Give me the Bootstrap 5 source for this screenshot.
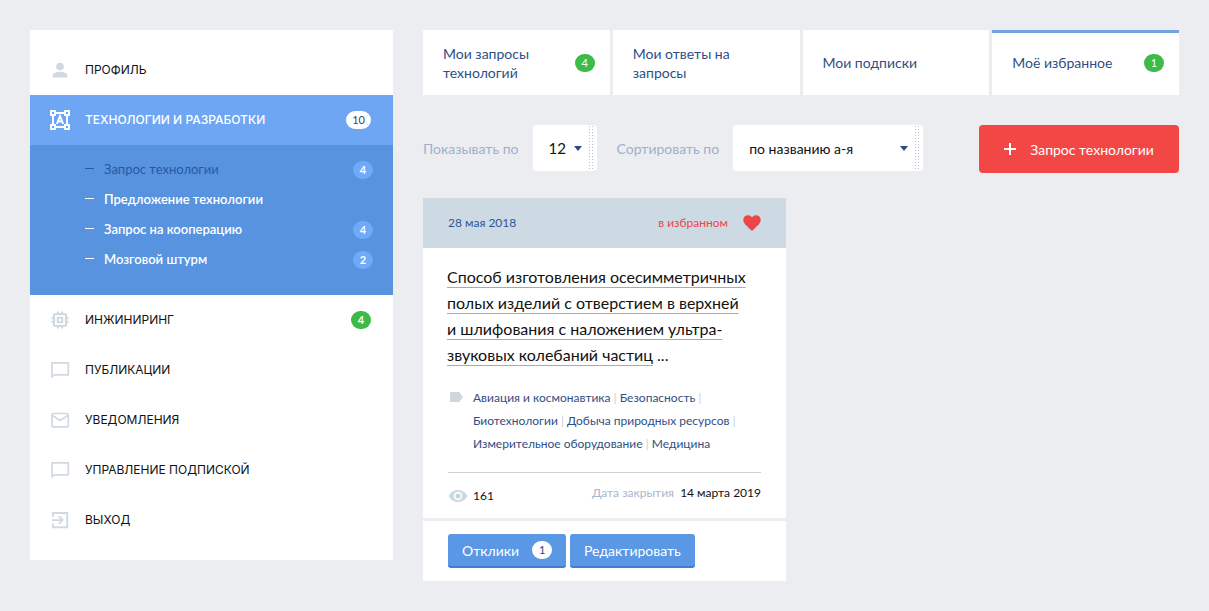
<!DOCTYPE html>
<html lang="ru">
<head>
<meta charset="utf-8">
<meta name="viewport" content="width=device-width, initial-scale=1">
<title>Моё избранное</title>
<link href="https://cdn.jsdelivr.net/npm/bootstrap@5.3.0/dist/css/bootstrap.min.css" rel="stylesheet">
<style>
  body { background: #ebedf1; color: #111; font-family: Lato, "Liberation Sans", sans-serif; font-size: 14px; }
  a { text-decoration: none; }
  .page { padding: 30px; }
  .page-row { --bs-gutter-x: 30px; }

  .side { background: #fff; padding: 15px 0; font-family: Inter, "Liberation Sans", sans-serif; font-size: 12px; }
  .side-link { height: 50px; padding: 0 22px 0 20px; color: #111; }
  .side-link svg { width: 20px; height: 20px; margin-right: 15px; color: #d0d9e1; }
  .side-link.current { background: #6ea6f4; color: #fff; font-weight: 500; }
  .side-link.current svg { color: #fff; }
  .sub { background: #5893df; padding: 10px 20px 20px 55px; font-family: Lato, "Liberation Sans", sans-serif; font-size: 13px; }
  .sub a { height: 30px; color: #fff; font-weight: 600; }
  .sub a::before { content: ""; width: 9px; height: 1px; margin: 0 10px 3px 0; background: currentColor; }
  .sub a.chosen { color: #2659a3; font-weight: 400; }

  .pill { min-width: 20px; height: 18px; padding: 0 6px; border-radius: 9px; font: 11px/18px Lato, sans-serif; text-align: center; }
  .pill-green { background: #3cbb48; color: #fff; }
  .pill-white { background: #fff; color: #38446e; }
  .pill-blue { background: #6ea9fa; color: #fff; font-weight: 700; }

  .tabs { gap: 3px; }
  .tabs a { flex: 1 1 0; height: 65px; padding: 0 15px 0 20px; background: #fff; color: #2d4f85; line-height: 19px; }
  .tabs a.chosen { border-top: 3px solid #72a3e2; padding-bottom: 3px; }

  .tools { margin-top: 30px; }
  .tools label { color: #9fb0cd; margin-right: 14px; }
  .pick { height: 46px; margin-right: 20px; padding: 0 16px; border: 0; border-radius: 4px; color: #111; font-size: 14px; appearance: none;
    background: #fff url("data:image/svg+xml,%3Csvg xmlns='http://www.w3.org/2000/svg' viewBox='0 0 8 5'%3E%3Cpath fill='%232b4c80' d='M0 0h8L4 5z'/%3E%3C/svg%3E") right 15px center / 8px 5px no-repeat; }
  .pick-wrap { position: relative; }
  .pick-wrap::after { content: ""; position: absolute; top: 1px; right: 22px; bottom: 1px; width: 6px; pointer-events: none;
    background: linear-gradient(90deg, transparent 1px, #fff 1px) 0 0 / 3px 3px, linear-gradient(#b9bfc9 1px, #fff 1px) 0 0 / 3px 3px; }
  .pick-count { width: 64px; font-size: 15px; }
  .pick-sort { width: 190px; }
  .btn-ask { width: 200px; height: 48px; border-radius: 4px; background: #f24744; color: #fff; font-size: 14px; }
  .btn-ask svg { width: 12px; height: 12px; margin-right: 14px; }

  .item { margin-top: 25px; }
  .item-head { height: 50px; padding: 0 25px; background: #cddae4; color: #2f5597; font-size: 12px; }
  .item-fav { color: #ee4548; }
  .item-fav svg { width: 18px; height: 16px; margin-left: 15px; }
  .item-body { background: #fff; padding: 16px 25px 10px; }
  .item-title { margin: 0 -1px 18px; font-size: 16px; line-height: 26px; font-weight: 400; }
  .item-title a { color: #111; text-decoration: underline; text-decoration-color: #aaa; text-decoration-thickness: 1px; text-underline-offset: 4px; text-decoration-skip-ink: none; }
  .tags { padding-bottom: 17px; border-bottom: 1px solid #d0d0d2; font-size: 12px; line-height: 23px; color: #c5d0dc; }
  .tags a { color: #2f4f85; }
  .tags svg { width: 13px; height: 10px; margin: 6px 10px 0 2px; color: #ccd7e0; }
  .stats { padding-top: 8px; font-size: 12px; line-height: 24px; }
  .stats svg { width: 20px; height: 14px; margin-right: 5px; }
  .stats .views { padding-top: 3px; }
  .stats .muted { color: #a9b6cc; }
  .item-foot { margin-top: 3px; padding: 13px 25px; background: #fff; }
  .btn-act { height: 34px; padding: 0 14px; border: 0; border-bottom: 2px solid #3f7fd0; border-radius: 3px; background: #5a98e6; color: #fff; font-size: 14px; }
  .btn-act .pill { margin-left: 13px; }
</style>
</head>
<body>
<div class="container-fluid page">
  <div class="row page-row">
    <nav class="col-4">
      <div class="side">
        <a href="#" class="side-link d-flex align-items-center"><svg viewBox="0 0 20 20" fill="currentColor"><circle cx="10" cy="6.500" r="3.800"/><path d="M2.700 17.500v-2c0-2.600 4.500-3.800 7.300-3.800s7.300 1.200 7.300 3.800v2z"/></svg>ПРОФИЛЬ</a>
        <a href="#" class="side-link current d-flex align-items-center"><svg viewBox="0 0 20 20" fill="none" stroke="currentColor" stroke-width="1.900"><path d="M5.500 3h9M5.500 17h9M3 5.500v9M17 5.500v9M1 1h4v4H1zM15 1h4v4h-4zM1 15h4v4H1zM15 15h4v4h-4zM6.800 14 10 6l3.200 8M8 11.500h4"/></svg>ТЕХНОЛОГИИ И РАЗРАБОТКИ<span class="pill pill-white ms-auto">10</span></a>
        <div class="sub">
          <a href="#" class="chosen d-flex align-items-center">Запрос технологии<span class="pill pill-blue ms-auto">4</span></a>
          <a href="#" class="d-flex align-items-center">Предложение технологии</a>
          <a href="#" class="d-flex align-items-center">Запрос на кооперацию<span class="pill pill-blue ms-auto">4</span></a>
          <a href="#" class="d-flex align-items-center">Мозговой штурм<span class="pill pill-blue ms-auto">2</span></a>
        </div>
        <a href="#" class="side-link d-flex align-items-center"><svg viewBox="0 0 20 20" fill="none" stroke="currentColor" stroke-width="2"><rect x="4" y="4" width="12" height="12" rx="1"/><rect x="7.800" y="7.800" width="4.400" height="4.400"/><path d="M8 4V1.500M12 4V1.500M8 18.500V16M12 18.500V16M4 8H1.500M4 12H1.500M18.500 8H16M18.500 12H16"/></svg>ИНЖИНИРИНГ<span class="pill pill-green fw-bold ms-auto">4</span></a>
        <a href="#" class="side-link d-flex align-items-center"><svg viewBox="0 0 20 20" fill="none" stroke="currentColor" stroke-width="1.700"><path d="M2 17V2.800h16.300v12H4.300z" stroke-linejoin="round"/></svg>ПУБЛИКАЦИИ</a>
        <a href="#" class="side-link d-flex align-items-center"><svg viewBox="0 0 20 20" fill="none" stroke="currentColor" stroke-width="1.700"><rect x="2" y="3.500" width="16.300" height="13.300" rx="1"/><path d="m2.500 5.500 7.600 5 7.700-5"/></svg>УВЕДОМЛЕНИЯ</a>
        <a href="#" class="side-link d-flex align-items-center"><svg viewBox="0 0 20 20" fill="none" stroke="currentColor" stroke-width="1.700"><path d="M2 17V2.800h16.300v12H4.300z" stroke-linejoin="round"/></svg>УПРАВЛЕНИЕ ПОДПИСКОЙ</a>
        <a href="#" class="side-link d-flex align-items-center"><svg viewBox="0 0 20 20" fill="none" stroke="currentColor" stroke-width="1.900"><path d="M2.900 7V3h14.300v14.300H2.900v-4M2 10.100h10M8.800 6.300l3.800 3.800-3.800 3.800"/></svg>ВЫХОД</a>
      </div>
    </nav>

    <main class="col-8">
      <nav class="tabs d-flex">
        <a href="#" class="d-flex align-items-center justify-content-between"><span>Мои запросы<br>технологий</span><span class="pill pill-green">4</span></a>
        <a href="#" class="d-flex align-items-center"><span>Мои ответы на<br>запросы</span></a>
        <a href="#" class="d-flex align-items-center">Мои подписки</a>
        <a href="#" class="chosen d-flex align-items-center justify-content-between">Моё избранное<span class="pill pill-green">1</span></a>
      </nav>

      <form class="tools d-flex align-items-start">
        <div class="pick-wrap d-flex align-items-center">
          <label for="count">Показывать по</label>
          <select id="count" class="pick pick-count"><option>12</option><option>24</option></select>
        </div>
        <div class="pick-wrap d-flex align-items-center">
          <label for="sort">Сортировать по</label>
          <select id="sort" class="pick pick-sort"><option>по названию а-я</option><option>по дате</option></select>
        </div>
        <button type="button" class="btn btn-ask ms-auto d-flex align-items-center justify-content-center p-0"><svg viewBox="0 0 12 12" stroke="currentColor" stroke-width="2"><path d="M6 0v12M0 6h12"/></svg>Запрос технологии</button>
      </form>

      <div class="row page-row">
        <article class="col-6">
          <div class="item">
            <div class="item-head d-flex align-items-center justify-content-between">
              <span>28 мая 2018</span>
              <a href="#" class="item-fav d-flex align-items-center">в избранном<svg viewBox="0 0 18 16" fill="currentColor"><path d="M9 16 7.700 14.800C3.100 10.600.3 8 .3 4.800.3 2.200 2.300.2 4.900.2 6.400.2 8 1 9 2.200 10 1 11.600.2 13.100.2c2.600 0 4.600 2 4.600 4.600 0 3.200-2.800 5.800-7.400 10z"/></svg></a>
            </div>
            <div class="item-body">
              <h2 class="item-title"><a href="#">Способ изготовления осесимметричных<br>полых изделий с отверстием в верхней<br>и шлифования с наложением ультра-<br>звуковых колебаний частиц</a> ...</h2>
              <div class="tags d-flex align-items-start">
                <svg class="flex-shrink-0" viewBox="0 0 13 10" fill="currentColor"><path d="M1 0h8.300L13 5 9.300 10H1a1 1 0 0 1-1-1V1a1 1 0 0 1 1-1z"/></svg>
                <div><a href="#">Авиация и космонавтика</a> | <a href="#">Безопасность</a> |<br><a href="#">Биотехнологии</a> | <a href="#">Добыча природных ресурсов</a> |<br><a href="#">Измерительное оборудование</a> | <a href="#">Медицина</a></div>
              </div>
              <div class="stats d-flex justify-content-between">
                <span class="views d-flex align-items-center"><svg viewBox="0 0 20 14"><path fill="#c9dae0" d="M10 1c4.200 0 7.700 2.500 9.200 6-1.500 3.500-5 6-9.200 6S2.300 10.500.8 7C2.300 3.500 5.800 1 10 1z"/><circle cx="10" cy="7" r="4.200" fill="#fff"/><circle cx="10" cy="7" r="2.500" fill="#c0d6de"/></svg>161</span>
                <span><span class="muted">Дата закрытия</span>&nbsp; 14 марта 2019</span>
              </div>
            </div>
            <div class="item-foot d-flex gap-1">
              <button type="button" class="btn-act d-flex align-items-center">Отклики<span class="pill pill-white">1</span></button>
              <button type="button" class="btn-act">Редактировать</button>
            </div>
          </div>
        </article>
      </div>
    </main>
  </div>
</div>
<script src="https://cdn.jsdelivr.net/npm/bootstrap@5.3.0/dist/js/bootstrap.bundle.min.js"></script>
</body>
</html>
